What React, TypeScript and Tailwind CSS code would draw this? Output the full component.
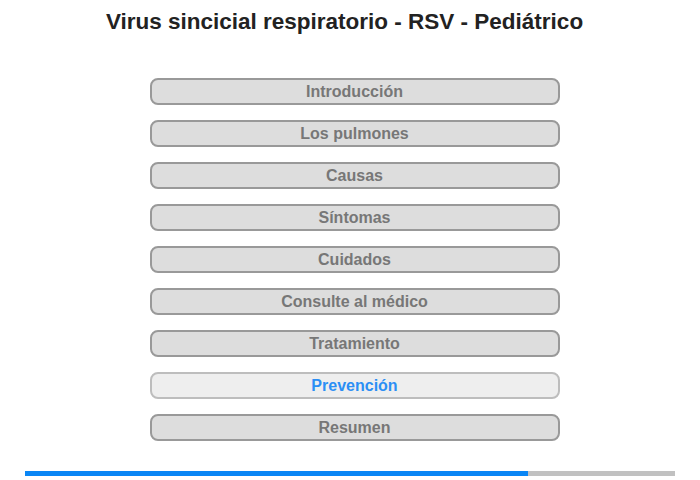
const items = [
  "Introducción",
  "Los pulmones",
  "Causas",
  "Síntomas",
  "Cuidados",
  "Consulte al médico",
  "Tratamiento",
  "Prevención",
  "Resumen",
];

const active = "Prevención";

export default function App() {
  return (
    <main className="w-[700px] h-[480px] bg-white font-['Liberation_Sans',Arial,sans-serif] flex flex-col">
      <h1 className="text-center text-[22.5px] font-bold text-[#222] pt-[9px] pr-[11px] leading-[26px]">
        Virus sincicial respiratorio - RSV - Pediátrico
      </h1>

      <div className="mt-[43px] pl-[9px] flex flex-col items-center gap-[15px]">
        {items.map((label) => {
          const isActive = label === active;
          return (
            <button
              key={label}
              className={
                isActive
                  ? "w-[410px] h-[27px] rounded-[8px] border-2 border-[#bdbdbd] bg-[#eeeeee] text-[#2b8ff5] text-[16px] font-bold leading-none"
                  : "w-[410px] h-[27px] rounded-[8px] border-2 border-[#999999] bg-[#dddddd] text-[#777777] text-[16px] font-bold leading-none"
              }
            >
              {label}
            </button>
          );
        })}
      </div>

      <div className="mt-[30px] mx-[25px] h-[5px] flex">
        <div className="w-[503px] bg-[#0a86f5]" />
        <div className="flex-1 bg-[#c1c1c1]" />
      </div>
    </main>
  );
}
